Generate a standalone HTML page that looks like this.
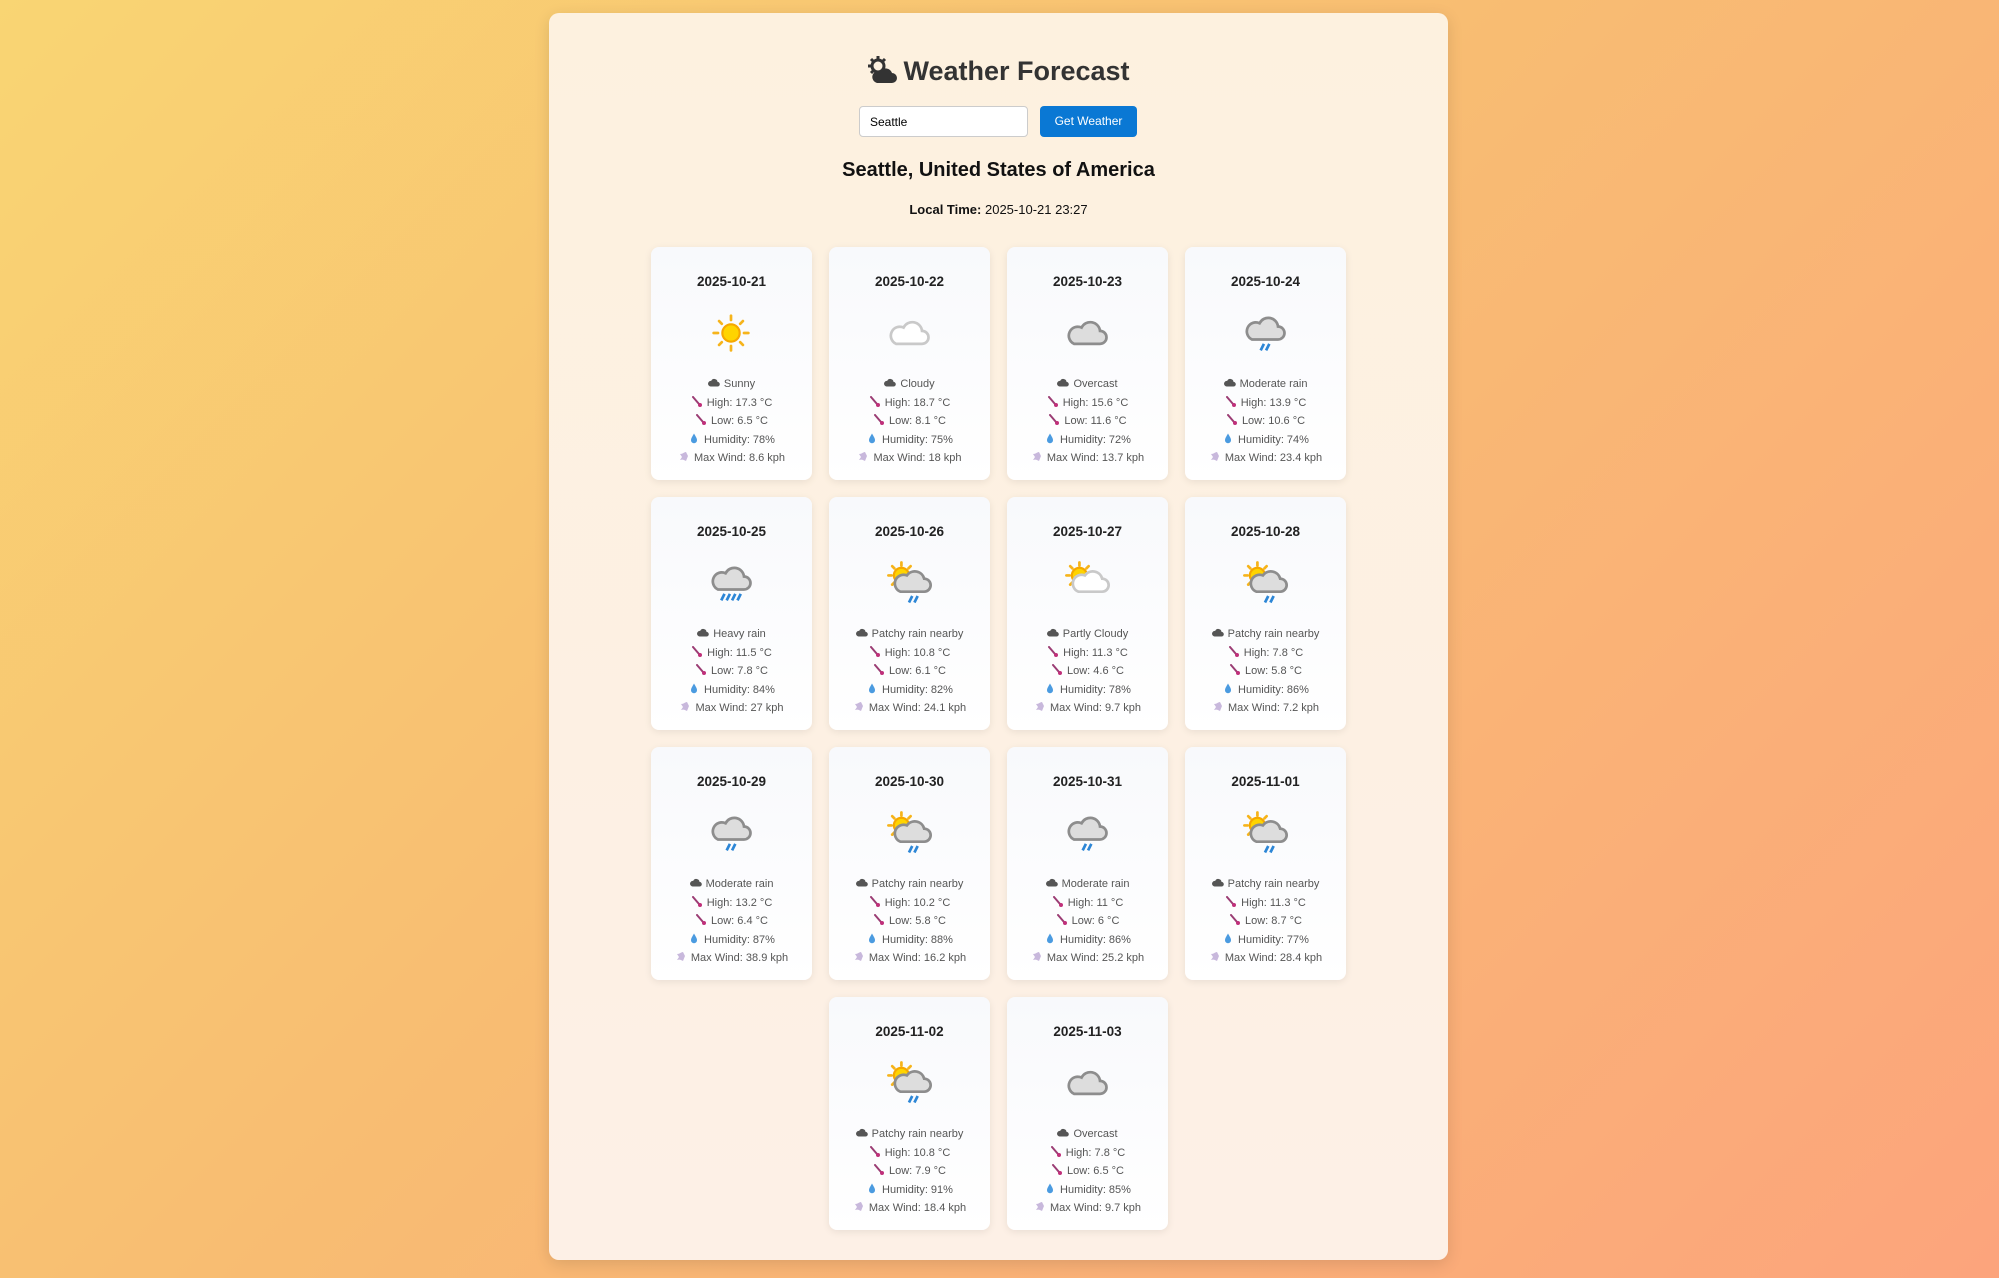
<!DOCTYPE html>
<html><head><meta charset="utf-8"><style>
*{box-sizing:border-box;margin:0;padding:0}
body{width:1999px;height:1278px;overflow:hidden;font-family:"Liberation Sans",sans-serif;background:linear-gradient(135deg,#f9d573 0%,#f8bd72 45%,#fca47c 100%);position:relative}
.wrap{position:absolute;left:549px;top:13px;width:899px;height:1247px;border-radius:10px;background:linear-gradient(180deg,#fdf1df 0%,#fdf0e6 100%);box-shadow:0 4px 16px rgba(0,0,0,.12)}
h1{position:absolute;left:0;right:0;top:40px;text-align:center;font-size:27px;font-weight:bold;color:#333;line-height:36px}
h1 svg{vertical-align:-4px;margin-right:6px}
.inp{position:absolute;left:310px;top:93px;width:169px;height:31px;border:1px solid #ccc;border-radius:4px;background:#fff;font:12px "Liberation Sans",sans-serif;padding:8px 10px;color:#000}
.btn{position:absolute;left:491px;top:93px;width:97px;height:31px;border-radius:4px;background:#0a78d4;color:#fff;font:12px "Liberation Sans",sans-serif;text-align:center;line-height:31px}
h2{position:absolute;left:0;right:0;top:143px;text-align:center;font-size:20px;font-weight:bold;color:#111;line-height:28px}
.lt{position:absolute;left:0;right:0;top:189px;text-align:center;font-size:13px;color:#111}
.card{position:absolute;width:161px;height:233px;background:linear-gradient(180deg,#f8f9fc,#fff);border-radius:8px;box-shadow:0 2px 8px rgba(0,0,0,.08)}
.d{position:absolute;top:27px;left:0;right:0;text-align:center;font-weight:bold;font-size:13.5px;color:#222}
.ic{position:absolute;top:60px;left:54px;width:52px;height:52px}
.t{position:absolute;top:128px;left:0;right:0;text-align:center;font-size:11px;color:#555;line-height:18.5px}
.t span{display:inline-block;width:12px;height:11px;vertical-align:-1px;margin-right:4px}
</style></head><body>
<svg width="0" height="0" style="position:absolute">
<defs>
<symbol id="sun" viewBox="0 0 48 48"><g stroke="#f6b41b" stroke-width="2.5" stroke-linecap="round"><line x1="24" y1="8" x2="24" y2="12"/><line x1="24" y1="36" x2="24" y2="40"/><line x1="8" y1="24" x2="12" y2="24"/><line x1="36" y1="24" x2="40" y2="24"/><line x1="13" y1="13" x2="15.5" y2="15.5"/><line x1="32.5" y1="32.5" x2="35" y2="35"/><line x1="13" y1="35" x2="15.5" y2="32.5"/><line x1="32.5" y1="15.5" x2="35" y2="13"/></g><circle cx="24" cy="24" r="8" fill="#ffd400" stroke="#f6a800" stroke-width="2"/></symbol>
<symbol id="cl" viewBox="0 0 48 48"><path d="M12 34h24a6 6 0 0 0 0-12a9 9 0 0 0-17-3a7 7 0 0 0-7 15z" fill="#fff" stroke="#c9c9c9" stroke-width="2.5"/></symbol>
<symbol id="oc" viewBox="0 0 48 48"><path d="M12 34h24a6 6 0 0 0 0-12a9 9 0 0 0-17-3a7 7 0 0 0-7 15z" fill="#ddd" stroke="#8d8d8d" stroke-width="2.5"/></symbol>
<symbol id="rn" viewBox="0 0 48 48"><path d="M12 30h24a6 6 0 0 0 0-12a9 9 0 0 0-17-3a7 7 0 0 0-7 15z" fill="#ddd" stroke="#8d8d8d" stroke-width="2.5"/><g stroke="#2c86d6" stroke-width="2.5"><line x1="23" y1="34" x2="20" y2="40"/><line x1="28" y1="34" x2="25" y2="40"/></g></symbol>
<symbol id="hr" viewBox="0 0 48 48"><path d="M12 30h24a6 6 0 0 0 0-12a9 9 0 0 0-17-3a7 7 0 0 0-7 15z" fill="#ddd" stroke="#8d8d8d" stroke-width="2.5"/><g stroke="#2c86d6" stroke-width="2.5"><line x1="18" y1="34" x2="15" y2="40"/><line x1="23" y1="34" x2="20" y2="40"/><line x1="28" y1="34" x2="25" y2="40"/><line x1="33" y1="34" x2="30" y2="40"/></g></symbol>
<symbol id="pr" viewBox="0 0 48 48"><g stroke="#f6b41b" stroke-width="2.5" stroke-linecap="round"><line x1="17" y1="5" x2="17" y2="8"/><line x1="5" y1="17" x2="8" y2="17"/><line x1="8.5" y1="8.5" x2="10.5" y2="10.5"/><line x1="25.5" y1="8.5" x2="23.5" y2="10.5"/><line x1="8.5" y1="25.5" x2="10.5" y2="23.5"/></g><circle cx="17" cy="17" r="7" fill="#ffd400" stroke="#f6a800" stroke-width="2"/><path d="M16 32h22a6 6 0 0 0 0-12a9 9 0 0 0-16-3a7 7 0 0 0-6 15z" fill="#ddd" stroke="#8d8d8d" stroke-width="2.5"/><g stroke="#2c86d6" stroke-width="2.5"><line x1="27" y1="36" x2="24" y2="42"/><line x1="32" y1="36" x2="29" y2="42"/></g></symbol>
<symbol id="pc" viewBox="0 0 48 48"><g stroke="#f6b41b" stroke-width="2.5" stroke-linecap="round"><line x1="17" y1="5" x2="17" y2="8"/><line x1="5" y1="17" x2="8" y2="17"/><line x1="8.5" y1="8.5" x2="10.5" y2="10.5"/><line x1="25.5" y1="8.5" x2="23.5" y2="10.5"/><line x1="8.5" y1="25.5" x2="10.5" y2="23.5"/></g><circle cx="17" cy="17" r="7" fill="#ffd400" stroke="#f6a800" stroke-width="2"/><path d="M16 32h22a6 6 0 0 0 0-12a9 9 0 0 0-16-3a7 7 0 0 0-6 15z" fill="#fff" stroke="#c9c9c9" stroke-width="2.5"/></symbol>
<symbol id="ci" viewBox="0 0 12 11"><path d="M2.5 9.5h7a2.3 2.3 0 0 0 0-4.6a3.3 3.3 0 0 0-6.3-1a2.8 2.8 0 0 0-.7 5.6z" fill="#555"/></symbol>
<symbol id="th" viewBox="0 0 12 11"><line x1="2" y1="1" x2="8" y2="8" stroke="#9b3d74" stroke-width="2" stroke-linecap="round"/><circle cx="9" cy="9" r="2" fill="#c0307a"/></symbol>
<symbol id="dr" viewBox="0 0 12 11"><path d="M6 0.5C4 4 3 5.5 3 7.2a3 3 0 0 0 6 0C9 5.5 8 4 6 0.5z" fill="#4b9be0"/></symbol>
<symbol id="wi" viewBox="0 0 12 11"><path d="M2 3c3 0 4-2 6-2l2 4l-2 5c-2-1-3-2-6-1l2-3z" fill="#c8b8dc"/></symbol>
</defs></svg>
<div class="wrap">
<h1><svg width="30" height="28" viewBox="0 0 30 28"><circle cx="11" cy="10" r="6" fill="none" stroke="#333" stroke-width="3"/><g stroke="#333" stroke-width="3"><line x1="11" y1="0" x2="11" y2="3"/><line x1="1" y1="10" x2="4" y2="10"/><line x1="4" y1="3" x2="6" y2="5"/><line x1="18" y1="3" x2="16" y2="5"/><line x1="4" y1="17" x2="6" y2="15"/></g><path d="M10 27h15a5 5 0 0 0 0-10a7 7 0 0 0-12-2a6 6 0 0 0-3 12z" fill="#333"/></svg>Weather Forecast</h1>
<div class="inp">Seattle</div>
<div class="btn">Get Weather</div>
<h2>Seattle, United States of America</h2>
<div class="lt"><b>Local Time:</b> 2025-10-21 23:27</div>
</div>
<div class="card" style="left:651px;top:247px"><div class="d">2025-10-21</div><svg class="ic"><use href="#sun"/></svg><div class="t"><span><svg width="12" height="11"><use href="#ci"/></svg></span>Sunny<br><span><svg width="12" height="11"><use href="#th"/></svg></span>High: 17.3 °C<br><span><svg width="12" height="11"><use href="#th"/></svg></span>Low: 6.5 °C<br><span><svg width="12" height="11"><use href="#dr"/></svg></span>Humidity: 78%<br><span><svg width="12" height="11"><use href="#wi"/></svg></span>Max Wind: 8.6 kph</div></div>
<div class="card" style="left:829px;top:247px"><div class="d">2025-10-22</div><svg class="ic"><use href="#cl"/></svg><div class="t"><span><svg width="12" height="11"><use href="#ci"/></svg></span>Cloudy<br><span><svg width="12" height="11"><use href="#th"/></svg></span>High: 18.7 °C<br><span><svg width="12" height="11"><use href="#th"/></svg></span>Low: 8.1 °C<br><span><svg width="12" height="11"><use href="#dr"/></svg></span>Humidity: 75%<br><span><svg width="12" height="11"><use href="#wi"/></svg></span>Max Wind: 18 kph</div></div>
<div class="card" style="left:1007px;top:247px"><div class="d">2025-10-23</div><svg class="ic"><use href="#oc"/></svg><div class="t"><span><svg width="12" height="11"><use href="#ci"/></svg></span>Overcast<br><span><svg width="12" height="11"><use href="#th"/></svg></span>High: 15.6 °C<br><span><svg width="12" height="11"><use href="#th"/></svg></span>Low: 11.6 °C<br><span><svg width="12" height="11"><use href="#dr"/></svg></span>Humidity: 72%<br><span><svg width="12" height="11"><use href="#wi"/></svg></span>Max Wind: 13.7 kph</div></div>
<div class="card" style="left:1185px;top:247px"><div class="d">2025-10-24</div><svg class="ic"><use href="#rn"/></svg><div class="t"><span><svg width="12" height="11"><use href="#ci"/></svg></span>Moderate rain<br><span><svg width="12" height="11"><use href="#th"/></svg></span>High: 13.9 °C<br><span><svg width="12" height="11"><use href="#th"/></svg></span>Low: 10.6 °C<br><span><svg width="12" height="11"><use href="#dr"/></svg></span>Humidity: 74%<br><span><svg width="12" height="11"><use href="#wi"/></svg></span>Max Wind: 23.4 kph</div></div>

<div class="card" style="left:651px;top:497px"><div class="d">2025-10-25</div><svg class="ic"><use href="#hr"/></svg><div class="t"><span><svg width="12" height="11"><use href="#ci"/></svg></span>Heavy rain<br><span><svg width="12" height="11"><use href="#th"/></svg></span>High: 11.5 °C<br><span><svg width="12" height="11"><use href="#th"/></svg></span>Low: 7.8 °C<br><span><svg width="12" height="11"><use href="#dr"/></svg></span>Humidity: 84%<br><span><svg width="12" height="11"><use href="#wi"/></svg></span>Max Wind: 27 kph</div></div>
<div class="card" style="left:829px;top:497px"><div class="d">2025-10-26</div><svg class="ic"><use href="#pr"/></svg><div class="t"><span><svg width="12" height="11"><use href="#ci"/></svg></span>Patchy rain nearby<br><span><svg width="12" height="11"><use href="#th"/></svg></span>High: 10.8 °C<br><span><svg width="12" height="11"><use href="#th"/></svg></span>Low: 6.1 °C<br><span><svg width="12" height="11"><use href="#dr"/></svg></span>Humidity: 82%<br><span><svg width="12" height="11"><use href="#wi"/></svg></span>Max Wind: 24.1 kph</div></div>
<div class="card" style="left:1007px;top:497px"><div class="d">2025-10-27</div><svg class="ic"><use href="#pc"/></svg><div class="t"><span><svg width="12" height="11"><use href="#ci"/></svg></span>Partly Cloudy<br><span><svg width="12" height="11"><use href="#th"/></svg></span>High: 11.3 °C<br><span><svg width="12" height="11"><use href="#th"/></svg></span>Low: 4.6 °C<br><span><svg width="12" height="11"><use href="#dr"/></svg></span>Humidity: 78%<br><span><svg width="12" height="11"><use href="#wi"/></svg></span>Max Wind: 9.7 kph</div></div>
<div class="card" style="left:1185px;top:497px"><div class="d">2025-10-28</div><svg class="ic"><use href="#pr"/></svg><div class="t"><span><svg width="12" height="11"><use href="#ci"/></svg></span>Patchy rain nearby<br><span><svg width="12" height="11"><use href="#th"/></svg></span>High: 7.8 °C<br><span><svg width="12" height="11"><use href="#th"/></svg></span>Low: 5.8 °C<br><span><svg width="12" height="11"><use href="#dr"/></svg></span>Humidity: 86%<br><span><svg width="12" height="11"><use href="#wi"/></svg></span>Max Wind: 7.2 kph</div></div>

<div class="card" style="left:651px;top:747px"><div class="d">2025-10-29</div><svg class="ic"><use href="#rn"/></svg><div class="t"><span><svg width="12" height="11"><use href="#ci"/></svg></span>Moderate rain<br><span><svg width="12" height="11"><use href="#th"/></svg></span>High: 13.2 °C<br><span><svg width="12" height="11"><use href="#th"/></svg></span>Low: 6.4 °C<br><span><svg width="12" height="11"><use href="#dr"/></svg></span>Humidity: 87%<br><span><svg width="12" height="11"><use href="#wi"/></svg></span>Max Wind: 38.9 kph</div></div>
<div class="card" style="left:829px;top:747px"><div class="d">2025-10-30</div><svg class="ic"><use href="#pr"/></svg><div class="t"><span><svg width="12" height="11"><use href="#ci"/></svg></span>Patchy rain nearby<br><span><svg width="12" height="11"><use href="#th"/></svg></span>High: 10.2 °C<br><span><svg width="12" height="11"><use href="#th"/></svg></span>Low: 5.8 °C<br><span><svg width="12" height="11"><use href="#dr"/></svg></span>Humidity: 88%<br><span><svg width="12" height="11"><use href="#wi"/></svg></span>Max Wind: 16.2 kph</div></div>
<div class="card" style="left:1007px;top:747px"><div class="d">2025-10-31</div><svg class="ic"><use href="#rn"/></svg><div class="t"><span><svg width="12" height="11"><use href="#ci"/></svg></span>Moderate rain<br><span><svg width="12" height="11"><use href="#th"/></svg></span>High: 11 °C<br><span><svg width="12" height="11"><use href="#th"/></svg></span>Low: 6 °C<br><span><svg width="12" height="11"><use href="#dr"/></svg></span>Humidity: 86%<br><span><svg width="12" height="11"><use href="#wi"/></svg></span>Max Wind: 25.2 kph</div></div>
<div class="card" style="left:1185px;top:747px"><div class="d">2025-11-01</div><svg class="ic"><use href="#pr"/></svg><div class="t"><span><svg width="12" height="11"><use href="#ci"/></svg></span>Patchy rain nearby<br><span><svg width="12" height="11"><use href="#th"/></svg></span>High: 11.3 °C<br><span><svg width="12" height="11"><use href="#th"/></svg></span>Low: 8.7 °C<br><span><svg width="12" height="11"><use href="#dr"/></svg></span>Humidity: 77%<br><span><svg width="12" height="11"><use href="#wi"/></svg></span>Max Wind: 28.4 kph</div></div>

<div class="card" style="left:829px;top:997px"><div class="d">2025-11-02</div><svg class="ic"><use href="#pr"/></svg><div class="t"><span><svg width="12" height="11"><use href="#ci"/></svg></span>Patchy rain nearby<br><span><svg width="12" height="11"><use href="#th"/></svg></span>High: 10.8 °C<br><span><svg width="12" height="11"><use href="#th"/></svg></span>Low: 7.9 °C<br><span><svg width="12" height="11"><use href="#dr"/></svg></span>Humidity: 91%<br><span><svg width="12" height="11"><use href="#wi"/></svg></span>Max Wind: 18.4 kph</div></div>
<div class="card" style="left:1007px;top:997px"><div class="d">2025-11-03</div><svg class="ic"><use href="#oc"/></svg><div class="t"><span><svg width="12" height="11"><use href="#ci"/></svg></span>Overcast<br><span><svg width="12" height="11"><use href="#th"/></svg></span>High: 7.8 °C<br><span><svg width="12" height="11"><use href="#th"/></svg></span>Low: 6.5 °C<br><span><svg width="12" height="11"><use href="#dr"/></svg></span>Humidity: 85%<br><span><svg width="12" height="11"><use href="#wi"/></svg></span>Max Wind: 9.7 kph</div></div>
</body></html>
